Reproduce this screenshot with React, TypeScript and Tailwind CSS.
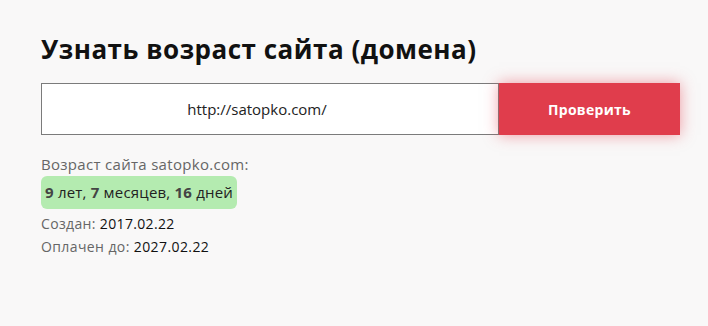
import React from 'react';

export default function App() {
  return (
    <div className="w-[708px] h-[326px] bg-[#f9f8f8] overflow-hidden" style={{ fontFamily: '"Open Sans", "Noto Sans", sans-serif' }}>
      <div className="pl-[41px] pt-[31px] w-[680px]">
        <h1 className="text-[26px] leading-[36px] font-bold text-[#111] tracking-[0.5px]">Узнать возраст сайта (домена)</h1>

        <div className="flex mt-[16px]">
          <div className="w-[458px] h-[52px] bg-white border border-[#7b7b7b] flex items-center justify-center pr-[26px] text-[15px] text-[#222]">
            http://satopko.com/
          </div>
          <button className="w-[181px] h-[52px] bg-[#e03d4c] text-white font-bold text-[14px] tracking-[0.3px] shadow-[0_0_14px_rgba(230,60,76,0.5)]">
            Проверить
          </button>
        </div>

        <div className="mt-[19px] text-[15px] tracking-[0.3px] text-[#666] leading-[20px]">Возраст сайта satopko.com:</div>
        <div className="inline-flex items-center mt-[2px] h-[33px] px-[4px] bg-[#b4ebb0] rounded-[6px] text-[15px] tracking-[0.2px] text-[#222]">
          <span className="font-bold text-[#444]">9</span>&nbsp;лет,&nbsp;<span className="font-bold text-[#444]">7</span>&nbsp;месяцев,&nbsp;<span className="font-bold text-[#444]">16</span>&nbsp;дней
        </div>
        <div className="mt-[3px] text-[14px] tracking-[0.35px] leading-[23px] text-[#666]">Создан: <span className="text-[#111]">2017.02.22</span></div>
        <div className="text-[14px] tracking-[0.4px] leading-[23px] text-[#666]">Оплачен до: <span className="text-[#111]">2027.02.22</span></div>
      </div>
    </div>
  );
}
